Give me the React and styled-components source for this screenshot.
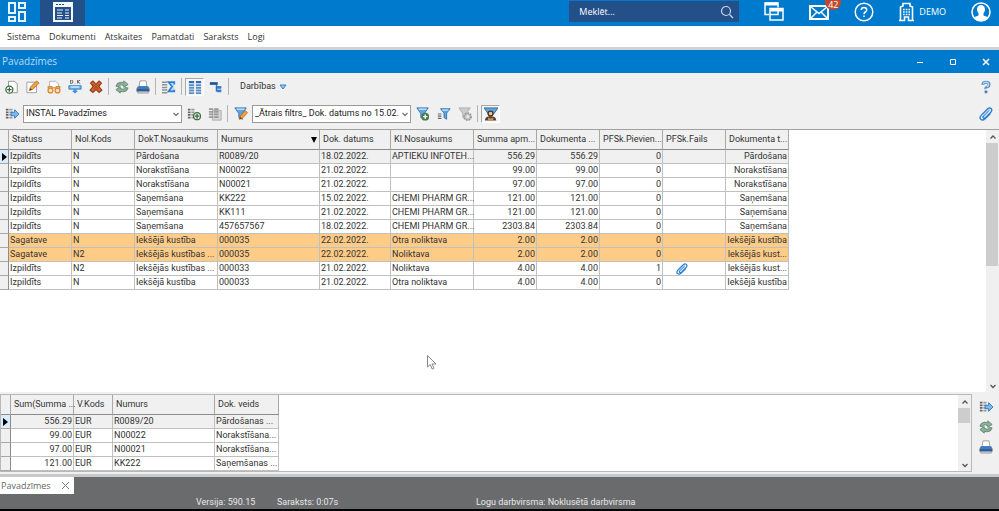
import React from "react";
import styled, { createGlobalStyle } from "styled-components";

const GlobalStyle = createGlobalStyle`
  * {
    box-sizing: border-box;
  }
  body {
    margin: 0;
    background: #000;
  }
  button, input, select {
    margin: 0;
    padding: 0;
    border: 0;
    background: none;
    font: inherit;
    color: inherit;
    outline: none;
  }
  a {
    color: inherit;
    text-decoration: none;
  }
  svg {
    display: block;
    flex: none;
  }
`;

const page = (
  <path d="M4 1.500h7l3 3v10H4z" fill="#fff" stroke="#8a8a8a" strokeWidth="1" />
);
const funnel = (
  <>
    <path d="M1 1h13L9.500 7.500V14l-4-2V7.500z" fill="#5fa5e0" stroke="#2f6fb0" />
    <path d="M3 2.500h9" stroke="#cfe6fa" strokeWidth="1.500" />
  </>
);
const plus = (
  <>
    <circle cx="10.500" cy="11" r="4.500" fill="#4c7a50" />
    <path d="M10.500 8.500v5M8 11h5" stroke="#fff" strokeWidth="1.600" />
  </>
);
const pencil = (
  <>
    <path d="M6 14l1-3.500 6-6.500 2.500 2.500-6 6.500z" fill="#f0a040" stroke="#b5651d" strokeWidth=".8" />
    <path d="M6 14l1-3 2 2z" fill="#6b3a10" />
  </>
);
const listRows = (
  <>
    <path d="M1 3h3M1 6h3M1 9h3M1 12h3" stroke="#666" strokeWidth="2" />
    <path d="M5 3h3.500M5 6h3.500M5 9h3.500M5 12h3.500" stroke="#9a9a9a" strokeWidth="2" />
  </>
);

const drawings = {
  addDoc: (
    <>
      {page}
      <circle cx="5" cy="11" r="4" fill="#fff" stroke="#3c6b40" strokeWidth="1.500" />
      <path d="M5 8.500v5M2.500 11h5" stroke="#3c6b40" strokeWidth="1.500" />
    </>
  ),
  editDoc: (
    <>
      <path d="M1 2.500h11v12H1z" fill="#fff" stroke="#999" />
      <path d="M4 12l1-4 7-7 3 2.500-7 7z" fill="#f0a040" stroke="#b5651d" strokeWidth=".8" />
      <path d="M4 12l.7-2.500 2 1.700z" fill="#333" />
    </>
  ),
  viewDoc: (
    <>
      <path d="M3 14V1.500h7l3 3V14" fill="#fff" stroke="#aaa" />
      <g fill="#fbe3c4" stroke="#d98a35" strokeWidth="1.500">
        <path d="M1.500 10V7.500h4V9h5V7.500h4V10" fill="none" />
        <circle cx="4" cy="12" r="2.800" />
        <circle cx="12" cy="12" r="2.800" />
      </g>
    </>
  ),
  debit: (
    <>
      <path d="M3 0v4h1q1.500 0 1.500-2T4 0zM11 0v4M14 0l-3 2 3 2M8 3.500v.5" fill="none" stroke="#555" />
      <path d="M1 6.500h14v4H1z" fill="#6bb0ea" stroke="#3a80c4" />
      <path d="M3 8h10" stroke="#e2f1fd" strokeWidth="1.500" />
      <path d="M6 10.500h4v2h1.500L8 15.500l-3.500-3H6z" fill="#4a96dc" />
    </>
  ),
  remove: (
    <>
      <path d="M2 3.500L4.500 1.500 8 5l3.500-3.500L14 3.500 11 7.500l3.500 4-3 2.500L8 10.500 4.500 14l-3-2.500 3.500-4z" fill="#e07a3c" stroke="#9a3c16" strokeWidth="1.600" />
      <path d="M5 5l6 5.500M11 5l-6 5.500" stroke="#b4491b" strokeWidth="1.500" />
    </>
  ),
  refresh: (
    <g fill="#8bb298" stroke="#4f7560" strokeWidth=".8">
      <path d="M1 7q1-4.500 6-4.500l3 .5V1l5 4-5 3.500V6.500L7 5.500Q4 5.500 4 8z" />
      <path d="M15 9q-1 4.500-6 4.500l-3-.5v2L1 11l5-3.500v2l3 1q3 0 3-2z" />
    </g>
  ),
  print: (
    <>
      <path d="M4.500 1h7l1 7h-9z" fill="#fff" stroke="#999" />
      <path d="M2 7h12l1.500 3v3.500H.5V10z" fill="#777" />
      <path d="M3 7h10l1 3H2z" fill="#2f7fd0" />
      <path d="M1 10.500h14v2H1z" fill="#1d5ca8" />
      <path d="M2 13h12v2H2z" fill="#c9d2da" stroke="#777" strokeWidth=".6" />
    </>
  ),
  sum: (
    <>
      <path d="M0 2.500h6M0 5.500h6M0 8.500h6M0 11.500h6M0 14.500h6" stroke="#8d9296" strokeWidth="1.800" />
      <path d="M14 5V2.500H7.500l4 5-4 5.500H14V11" fill="#bcdcf6" stroke="#2d7fd3" strokeWidth="2" />
    </>
  ),
  columns: (
    <>
      <path d="M1 2.500h6M9 2.500h6" stroke="#2d6fb3" strokeWidth="2.500" />
      <path d="M1 6h6M9 6h6M1 9h6M9 9h6M1 12h6M9 12h6M1 15h6M9 15h6" stroke="#5b8fc2" strokeWidth="2.200" />
    </>
  ),
  tree: (
    <>
      <path d="M1 4h9" stroke="#1c4f94" strokeWidth="3" />
      <path d="M8.500 5v8M9 8h5M9 12h5" stroke="#2d6fb3" strokeWidth="1.500" />
      <path d="M9 8.500h5M9 12.500h5" stroke="#3a7fc6" strokeWidth="3" />
    </>
  ),
  exportRows: (
    <>
      {listRows}
      <path d="M7 6h4V3l5 5-5 5v-3H7z" fill="#7db8ee" stroke="#2b74bd" />
    </>
  ),
  addRows: (
    <>
      {listRows}
      <circle cx="11.500" cy="10.500" r="4" fill="#dfe9df" stroke="#3c6b40" strokeWidth="1.500" />
      <path d="M11.500 8v5M9 10.500h5" stroke="#3c6b40" strokeWidth="1.500" />
    </>
  ),
  copyRows: (
    <>
      <path d="M5 4h10v11H5z" fill="#d5d5d5" stroke="#aaa" />
      <path d="M1 2.500h5M7 2.500h5M1 5.500h5M7 5.500h5M1 8.500h5M7 8.500h5M1 11.500h5M7 11.500h5" stroke="#999" strokeWidth="2" />
    </>
  ),
  funnelEdit: (
    <>
      {funnel}
      {pencil}
    </>
  ),
  funnelAdd: (
    <>
      {funnel}
      {plus}
    </>
  ),
  funnelList: (
    <>
      <path d="M4 2h11l-4 5v7l-3-2V7z" fill="#5fa5e0" stroke="#2f6fb0" />
      <path d="M6 3.500h7" stroke="#cfe6fa" strokeWidth="1.500" />
      <path d="M1 8h4M1 10.500h4M1 13h4" stroke="#666" strokeWidth="1.300" />
    </>
  ),
  funnelOff: (
    <>
      <path d="M1 1h13L9.500 7.500V14l-4-2V7.500z" fill="#ccc" stroke="#aaa" />
      <circle cx="11" cy="11" r="4" fill="#c4c4c4" stroke="#9a9a9a" strokeDasharray="2 1" strokeWidth="2" />
      <circle cx="11" cy="11" r="1.500" fill="#eee" />
    </>
  ),
  funnelUser: (
    <>
      <path d="M0 1h16l-5 7H5z" fill="#5fa5e0" stroke="#35618d" />
      <circle cx="7.500" cy="7.500" r="2.800" fill="#f2c49b" stroke="#4b3424" strokeWidth="1.500" />
      <path d="M1 15.500q0-5 6.500-5t6.500 5z" fill="#4a4440" />
      <path d="M4.500 12l3 1 3-1v3h-6z" fill="#e0893c" />
    </>
  ),
  question: (
    <>
      <path d="M4.500 5.500Q4.500 2.500 8 2.500t3.500 2.500q0 2-2 3T8 10" fill="none" stroke="#5b90c8" strokeWidth="3.500" />
      <path d="M5 4.500Q5.500 2.500 8 2.500t3 2.500q0 2-2 3" fill="none" stroke="#b9d8f4" strokeWidth="1.500" />
      <circle cx="8" cy="13.500" r="1.800" fill="#4a82bd" />
    </>
  ),
  clip: (
    <g fill="none" stroke="#2d7fd3" strokeWidth="1.600" strokeLinecap="round">
      <path d="M10.500 5L5 10.500q-1 1.500.3 2.200 1 .6 2-.5L13.500 6q2-2.500.3-4.200Q12 .3 9.700 2.300L3 9q-3 3-1 5 2.200 2 5-.7L12.500 8" />
      <path d="M11.500 3.500l-6 6" stroke="#86b8ec" />
    </g>
  ),
};

const Icon = ({ name, size = 14 }) => (
  <svg width={size} height={size} viewBox="0 0 16 16" aria-hidden="true">
    {drawings[name]}
  </svg>
);

const Chevron = ({ up, color = "#555" }) => (
  <svg width="8" height="8" viewBox="0 0 8 8" aria-hidden="true">
    <path
      d={up ? "M1.500 5.500L4 3l2.500 2.500" : "M1.500 3L4 5.500 6.500 3"}
      fill="none"
      stroke={color}
      strokeWidth="1.300"
    />
  </svg>
);

const docColumns = [
  { title: "Statuss", width: 63 },
  { title: "Nol.Kods", width: 63 },
  { title: "DokT.Nosaukums", width: 83 },
  { title: "Numurs", width: 102, sorted: true },
  { title: "Dok. datums", width: 71 },
  { title: "Kl.Nosaukums", width: 83 },
  { title: "Summa apm...", width: 63, right: true },
  { title: "Dokumenta ...", width: 63, right: true },
  { title: "PFSk.Pievien...", width: 63, right: true },
  { title: "PFSk.Fails", width: 63 },
  { title: "Dokumenta t...", width: 63, right: true },
];

const docs = [
  ["Izpildīts", "N", "Pārdošana", "R0089/20", "18.02.2022.", "APTIEKU INFOTEH...", "556.29", "556.29", "0", "", "Pārdošana"],
  ["Izpildīts", "N", "Norakstīšana", "N00022", "21.02.2022.", "", "99.00", "99.00", "0", "", "Norakstīšana"],
  ["Izpildīts", "N", "Norakstīšana", "N00021", "21.02.2022.", "", "97.00", "97.00", "0", "", "Norakstīšana"],
  ["Izpildīts", "N", "Saņemšana", "KK222", "15.02.2022.", "CHEMI PHARM GR...", "121.00", "121.00", "0", "", "Saņemšana"],
  ["Izpildīts", "N", "Saņemšana", "KK111", "21.02.2022.", "CHEMI PHARM GR...", "121.00", "121.00", "0", "", "Saņemšana"],
  ["Izpildīts", "N", "Saņemšana", "457657567", "18.02.2022.", "CHEMI PHARM GR...", "2303.84", "2303.84", "0", "", "Saņemšana"],
  ["Sagatave", "N", "Iekšējā kustība", "000035", "22.02.2022.", "Otra noliktava", "2.00", "2.00", "0", "", "Iekšējā kustība"],
  ["Sagatave", "N2", "Iekšējās kustības ...", "000035", "22.02.2022.", "Noliktava", "2.00", "2.00", "0", "", "Iekšējās kust..."],
  ["Izpildīts", "N2", "Iekšējās kustības ...", "000033", "21.02.2022.", "Noliktava", "4.00", "4.00", "1", "clip", "Iekšējās kust..."],
  ["Izpildīts", "N", "Iekšējā kustība", "000033", "21.02.2022.", "Otra noliktava", "4.00", "4.00", "0", "", "Iekšējā kustība"],
];

const sumColumns = [
  { title: "Sum(Summa ...", width: 63, right: true },
  { title: "V.Kods", width: 39 },
  { title: "Numurs", width: 102 },
  { title: "Dok. veids", width: 64 },
];

const sums = [
  ["556.29", "EUR", "R0089/20", "Pārdošanas ..."],
  ["99.00", "EUR", "N00022", "Norakstīšana..."],
  ["97.00", "EUR", "N00021", "Norakstīšana..."],
  ["121.00", "EUR", "KK222", "Saņemšanas ..."],
];

const DataGrid = ({ columns, rows, markWidth }) => (
  <Table>
    <colgroup>
      <Col $w={markWidth} />
      {columns.map((c, i) => (
        <Col key={i} $w={c.width} />
      ))}
    </colgroup>
    <thead>
      <tr>
        <Th />
        {columns.map((c, i) => (
          <Th key={i}>
            <HeadLabel>
              {c.title}
              {c.sorted && (
                <svg width="8" height="6" viewBox="0 0 8 6">
                  <path d="M0 0h6L3 6z" />
                </svg>
              )}
            </HeadLabel>
          </Th>
        ))}
      </tr>
    </thead>
    <tbody>
      {rows.map((row, r) => (
        <Row key={r} $current={r === 0} $draft={row[0] === "Sagatave"}>
          <Mark $current={r === 0}>
            {r === 0 && (
              <svg width="5" height="8" viewBox="0 0 5 8">
                <path d="M0 0l5 4-5 4z" />
              </svg>
            )}
          </Mark>
          {row.map((cell, i) => (
            <Td key={i} $right={columns[i].right}>
              {cell === "clip" ? (
                <ClipCell>
                  <Icon name="clip" size={12} />
                </ClipCell>
              ) : (
                cell
              )}
            </Td>
          ))}
        </Row>
      ))}
    </tbody>
  </Table>
);

const Scroll = ({ thumb }) => (
  <ScrollBar>
    <ScrollButton aria-label="Uz augšu">
      <Chevron up />
    </ScrollButton>
    <Thumb $h={thumb} />
    <ScrollButton aria-label="Uz leju">
      <Chevron />
    </ScrollButton>
  </ScrollBar>
);

const Tool = ({ name, label, pressed }) => (
  <ToolButton aria-label={label} $pressed={pressed}>
    <Icon name={name} />
  </ToolButton>
);

const Drop = ({ label, value }) => (
  <DropBox>
    <DropSelect aria-label={label} defaultValue={value}>
      <option>{value}</option>
    </DropSelect>
    <DropArrow>
      <Chevron color="#777" />
    </DropArrow>
  </DropBox>
);

const menu = ["Sistēma", "Dokumenti", "Atskaites", "Pamatdati", "Saraksts", "Logi"];

const App = () => (
  <>
    <GlobalStyle />
    <Screen>
      <TopBar>
        <TopTab aria-label="Sākums">
          <svg width="19" height="20" viewBox="0 0 19 20" fill="none" stroke="#e6f3fc" strokeWidth="2">
            <path d="M1 1h6v10H1zM11 1h6v5h-6zM1 15h6v4H1zM11 10h6v9h-6z" />
          </svg>
        </TopTab>
        <TopTab aria-label="Pavadzīmes" $active>
          <svg width="20" height="20" viewBox="0 0 20 20">
            <path d="M0 0h20v20H0z" fill="#f4f8fc" />
            <path d="M2 5h16v13H2z" fill="#24508a" />
            <path d="M3 2.500h2M6 2.500h2M9 2.500h2" stroke="#24508a" />
            <path d="M4 8h6M4 11h5M4 13.500h6M4 16h5M12 8h4M12 11h4M12 13.500h4M12 16h4" stroke="#e8eff7" strokeWidth="1.200" />
          </svg>
        </TopTab>
        <TopTools>
          <Search>
            <SearchInput aria-label="Meklēt" placeholder="Meklēt..." />
            <svg width="14" height="14" viewBox="0 0 14 14" fill="none" stroke="#c4d6ea" strokeWidth="1.200">
              <circle cx="6" cy="6" r="4.500" />
              <path d="M9.500 9.500L13 13" />
            </svg>
          </Search>
          <TopButton aria-label="Logi">
            <svg width="20" height="20" viewBox="0 0 20 20" fill="none" stroke="#fff" strokeWidth="1.500">
              <path d="M5 12.500H1V1h13v4.500" />
              <path d="M1 2h13" strokeWidth="3" />
              <path d="M6 6.500h13V18H6z" />
              <path d="M6 8h13" strokeWidth="3" />
              <path d="M6 12.500h8V9" />
            </svg>
          </TopButton>
          <TopButton aria-label="Ziņas">
            <svg width="20" height="20" viewBox="0 0 20 20" fill="none" stroke="#fff">
              <path d="M1 4h18v13H1z" strokeWidth="2" />
              <path d="M2 5l8 6.500L18 5M2 16l6-6M18 16l-6-6" strokeWidth="1.500" />
            </svg>
            <Badge>42</Badge>
          </TopButton>
          <TopButton aria-label="Palīdzība">
            <svg width="20" height="20" viewBox="0 0 20 20" fill="none" stroke="#fff" strokeWidth="1.500">
              <circle cx="10" cy="10" r="8.800" />
              <path d="M7.300 8Q7.300 5.500 10 5.500T12.700 8q0 1.200-1.400 2T10 12.200M10 13.500v1.500" />
            </svg>
          </TopButton>
          <Company href="#demo">
            <svg width="15" height="20" viewBox="0 0 15 20" fill="none" stroke="#fff">
              <path d="M1.500 18V5L4 4V1.500h7V4l2.500 1v13M0 18.500h5.500V15h4v3.500H15" strokeWidth="1.600" />
              <path d="M4 7.500h7M4 10h7M4 12.500h7" strokeWidth="1.500" strokeDasharray="1.700 1" />
            </svg>
            DEMO
          </Company>
          <TopButton aria-label="Lietotājs">
            <svg width="20" height="20" viewBox="0 0 20 20">
              <circle cx="10" cy="10" r="9" fill="none" stroke="#fff" strokeWidth="1.500" />
              <ellipse cx="10" cy="7.500" rx="4" ry="4.500" fill="#fff" />
              <path d="M7.500 10h5v3.500l4 1.500q-2.500 3.500-6.500 3.500T3.500 15l4-1.500z" fill="#fff" />
            </svg>
          </TopButton>
        </TopTools>
      </TopBar>

      <MenuBar>
        {menu.map((item) => (
          <a href={"#" + item} key={item}>
            {item}
          </a>
        ))}
      </MenuBar>

      <TitleBar>
        <Title>Pavadzīmes</Title>
        <WindowButton aria-label="Minimizēt">
          <svg width="8" height="8" viewBox="0 0 8 8" stroke="#fff">
            <path d="M1 4.500h6" />
          </svg>
        </WindowButton>
        <WindowButton aria-label="Maksimizēt">
          <svg width="8" height="8" viewBox="0 0 8 8" fill="none" stroke="#fff">
            <path d="M1.500 1.500h5v5h-5z" />
          </svg>
        </WindowButton>
        <WindowButton aria-label="Aizvērt">
          <svg width="8" height="8" viewBox="0 0 8 8" stroke="#fff" strokeWidth="1.500">
            <path d="M1 1l6 6M7 1L1 7" />
          </svg>
        </WindowButton>
      </TitleBar>

      <ToolArea>
        <ToolBar>
          <Tool name="addDoc" label="Jauns" />
          <Tool name="editDoc" label="Labot" />
          <Tool name="viewDoc" label="Skatīt" />
          <Tool name="debit" label="Kontējums" />
          <Tool name="remove" label="Dzēst" />
          <Divider />
          <Tool name="refresh" label="Atjaunot" />
          <Tool name="print" label="Drukāt" />
          <Divider />
          <Tool name="sum" label="Summas" />
          <Divider />
          <Tool name="columns" label="Kolonnas" pressed />
          <Tool name="tree" label="Koks" />
          <Divider />
          <ActionsButton>
            Darbības
            <svg width="8" height="6" viewBox="0 0 8 6">
              <path d="M1 1h6L4 5z" fill="#9cc9f2" stroke="#2f7fd0" />
            </svg>
          </ActionsButton>
          <Spacer />
          <Tool name="question" label="Palīgs" />
        </ToolBar>
        <ToolBar>
          <Tool name="exportRows" label="Eksportēt" />
          <Drop label="Skats" value="INSTAL Pavadzīmes" />
          <Tool name="addRows" label="Pievienot skatu" />
          <Tool name="copyRows" label="Kopēt skatu" />
          <Divider />
          <Tool name="funnelEdit" label="Labot filtru" />
          <Drop label="Filtrs" value="_Ātrais filtrs_ Dok. datums no 15.02." />
          <Tool name="funnelAdd" label="Jauns filtrs" />
          <Tool name="funnelList" label="Filtru saraksts" />
          <Tool name="funnelOff" label="Noņemt filtru" />
          <Divider />
          <Tool name="funnelUser" label="Mans filtrs" pressed />
          <Spacer />
          <Tool name="clip" label="Pielikumi" />
        </ToolBar>
      </ToolArea>

      <MainPane>
        <PaneBody>
          <DataGrid columns={docColumns} rows={docs} markWidth={9} />
        </PaneBody>
        <Scroll thumb={123} />
        <Pointer width="10" height="15" viewBox="0 0 10 15">
          <path d="M.5.500v11.500l2.700-2.500 2 4.500 1.800-.8-2-4.200h4z" fill="#fff" stroke="#888" />
        </Pointer>
      </MainPane>

      <SumPane>
        <SumFrame>
          <PaneBody>
            <DataGrid columns={sumColumns} rows={sums} markWidth={10} />
          </PaneBody>
          <Scroll thumb={15} />
        </SumFrame>
        <SideTools>
          <Tool name="exportRows" label="Eksportēt summas" />
          <Tool name="refresh" label="Atjaunot summas" />
          <Tool name="print" label="Drukāt summas" />
        </SideTools>
      </SumPane>

      <Footer>
        <WindowTab>
          Pavadzīmes
          <CloseTab aria-label="Aizvērt cilni">
            <svg width="9" height="9" viewBox="0 0 9 9" stroke="#777">
              <path d="M1 1l7 7M8 1L1 8" />
            </svg>
          </CloseTab>
        </WindowTab>
        <Status>
          <span>Versija: 590.15</span>
          <span>Saraksts: 0:07s</span>
          <span>Logu darbvirsma: Noklusētā darbvirsma</span>
        </Status>
      </Footer>
    </Screen>
  </>
);

export default App;

const Screen = styled.div`
  display: flex;
  flex-direction: column;
  min-height: 100vh;
  border-bottom: 2px solid #000;
  background: #f0f0f0;
  font-family: Roboto, "Liberation Sans", sans-serif;
  font-size: 9px;
  line-height: 13px;
  color: #333;
`;

const TopBar = styled.header`
  display: flex;
  height: 26px;
  background: #007acc;
  font-family: "Open Sans", sans-serif;
  color: #fff;
`;

const TopTab = styled.button`
  display: flex;
  justify-content: center;
  padding-top: 2px;
  width: ${(props) => (props.$active ? 45 : 40)}px;
  padding-right: ${(props) => (props.$active ? 0 : 6)}px;
  background: ${(props) => (props.$active ? "#24508a" : "transparent")};
`;

const TopTools = styled.div`
  display: flex;
  align-items: flex-start;
  gap: 25px;
  margin-left: auto;
  padding: 1px 8px 0 0;
`;

const Search = styled.div`
  display: flex;
  align-items: center;
  padding: 0 5px 0 10px;
  width: 170px;
  height: 21px;
  background: #24508a;
`;

const SearchInput = styled.input`
  flex: 1;
  min-width: 0;
  &::placeholder {
    color: #fff;
    opacity: 1;
  }
`;

const TopButton = styled.button`
  position: relative;
  width: 20px;
  height: 21px;
`;

const Badge = styled.span`
  position: absolute;
  top: -8px;
  left: 16px;
  padding-top: 7px;
  width: 16px;
  height: 17px;
  border-radius: 8px;
  background: #c0492f;
  line-height: 9px;
  text-align: center;
`;

const Company = styled.a`
  display: flex;
  align-items: center;
  gap: 5px;
  height: 21px;
`;

const MenuBar = styled.nav`
  display: flex;
  align-items: center;
  gap: 9px;
  padding: 0 7px;
  height: 24px;
  border-bottom: 3px solid #d2d2d2;
  background: #fff;
  font-family: "Open Sans", sans-serif;
`;

const TitleBar = styled.div`
  display: flex;
  align-items: center;
  gap: 17px;
  padding: 0 5px 0 2px;
  height: 23px;
  background: #007acc;
`;

const Title = styled.h1`
  flex: 1;
  margin: 0;
  font-family: "Open Sans", sans-serif;
  font-size: 10px;
  font-weight: normal;
  color: #b9dcf5;
`;

const WindowButton = styled.button`
  display: flex;
  align-items: center;
  justify-content: center;
  width: 16px;
  height: 16px;
`;

const ToolArea = styled.div`
  padding: 0 4px 2px 2px;
`;

const ToolBar = styled.div`
  display: flex;
  align-items: center;
  gap: 2px;
  height: 27px;
`;

const ToolButton = styled.button`
  display: flex;
  align-items: center;
  justify-content: center;
  width: 19px;
  height: 18px;
  border: 1px solid;
  border-color: ${(props) =>
    props.$pressed ? "#a8a8a8 #fff #fff #a8a8a8" : "transparent"};
  background: ${(props) => (props.$pressed ? "#f6f6f6" : "transparent")};
`;

const Divider = styled.div`
  margin: 0 1px;
  width: 1px;
  height: 17px;
  background: #b4b4b4;
`;

const ActionsButton = styled.button`
  display: flex;
  align-items: center;
  gap: 3px;
  margin-left: 8px;
`;

const Spacer = styled.div`
  flex: 1;
`;

const DropBox = styled.div`
  position: relative;
  width: 159px;
  height: 18px;
`;

const DropSelect = styled.select`
  appearance: none;
  padding: 0 9px 0 2px;
  width: 100%;
  height: 100%;
  border: 1px solid #9a9a9a;
  background: #fff;
  color: #222;
`;

const DropArrow = styled.span`
  position: absolute;
  top: 5px;
  right: 2px;
  pointer-events: none;
`;

const MainPane = styled.main`
  position: relative;
  display: flex;
  flex: 1;
  min-height: 180px;
  border-top: 1px solid #a0a0a0;
  background: #fff;
`;

const PaneBody = styled.div`
  flex: 1;
  min-width: 0;
  overflow: hidden;
`;

const Table = styled.table`
  table-layout: fixed;
  width: 0;
  border-collapse: separate;
  border-spacing: 0;
`;

const Col = styled.col`
  width: ${(props) => props.$w}px;
`;

const Th = styled.th`
  padding: 0 0 0 3px;
  height: 20px;
  border-right: 1px solid #a8a8a8;
  border-bottom: 1px solid #8c8c8c;
  background: #f0f0f0;
  font-weight: normal;
  text-align: left;
  white-space: nowrap;
`;

const HeadLabel = styled.div`
  display: flex;
  align-items: center;
  justify-content: space-between;
`;

const Row = styled.tr`
  background: ${(props) =>
    props.$draft ? "#ffcc88" : props.$current ? "#f0f0f0" : "#fff"};
`;

const Mark = styled.td`
  padding: 0 0 0 2px;
  height: 14px;
  border-right: 1px solid #8c8c8c;
  border-bottom: 1px solid #a8a8a8;
  background: ${(props) => (props.$current ? "#d9ecfb" : "#f0f0f0")};
`;

const Td = styled.td`
  padding: 0 1px;
  height: 14px;
  border-right: 1px solid #c0c0c0;
  border-bottom: 1px solid #c0c0c0;
  text-align: ${(props) => (props.$right ? "right" : "left")};
  white-space: nowrap;
`;

const ClipCell = styled.span`
  display: block;
  padding-left: 12px;
`;

const ScrollBar = styled.div`
  display: flex;
  flex-direction: column;
  width: 13px;
  background: #f0f0f0;
`;

const ScrollButton = styled.button`
  display: flex;
  align-items: center;
  justify-content: center;
  height: 13px;
  &:last-child {
    margin-top: auto;
  }
`;

const Thumb = styled.div`
  margin-right: 1px;
  height: ${(props) => props.$h}px;
  background: #cdcdcd;
`;

const Pointer = styled.svg`
  position: absolute;
  top: 225px;
  left: 427px;
`;

const SumPane = styled.section`
  display: flex;
  padding: 2px 0;
`;

const SumFrame = styled.div`
  display: flex;
  flex: 1;
  border: 1px solid #b8b8b8;
  background: #fff;
`;

const SideTools = styled.div`
  display: flex;
  flex-direction: column;
  gap: 2px;
  padding: 4px 4px 0;
`;

const Footer = styled.footer`
  border-top: 3px solid #c8c8c8;
  background: #6a6b6d;
`;

const WindowTab = styled.div`
  display: inline-flex;
  align-items: center;
  gap: 10px;
  padding: 0 4px 0 1px;
  height: 17px;
  background: #fff;
  vertical-align: top;
  font-family: "Open Sans", sans-serif;
  color: #666;
`;

const CloseTab = styled.button`
  display: flex;
`;

const Status = styled.div`
  display: grid;
  grid-template-columns: 81px 199px 1fr;
  align-items: end;
  padding-left: 196px;
  height: 15px;
  color: #e8e8e8;
`;
